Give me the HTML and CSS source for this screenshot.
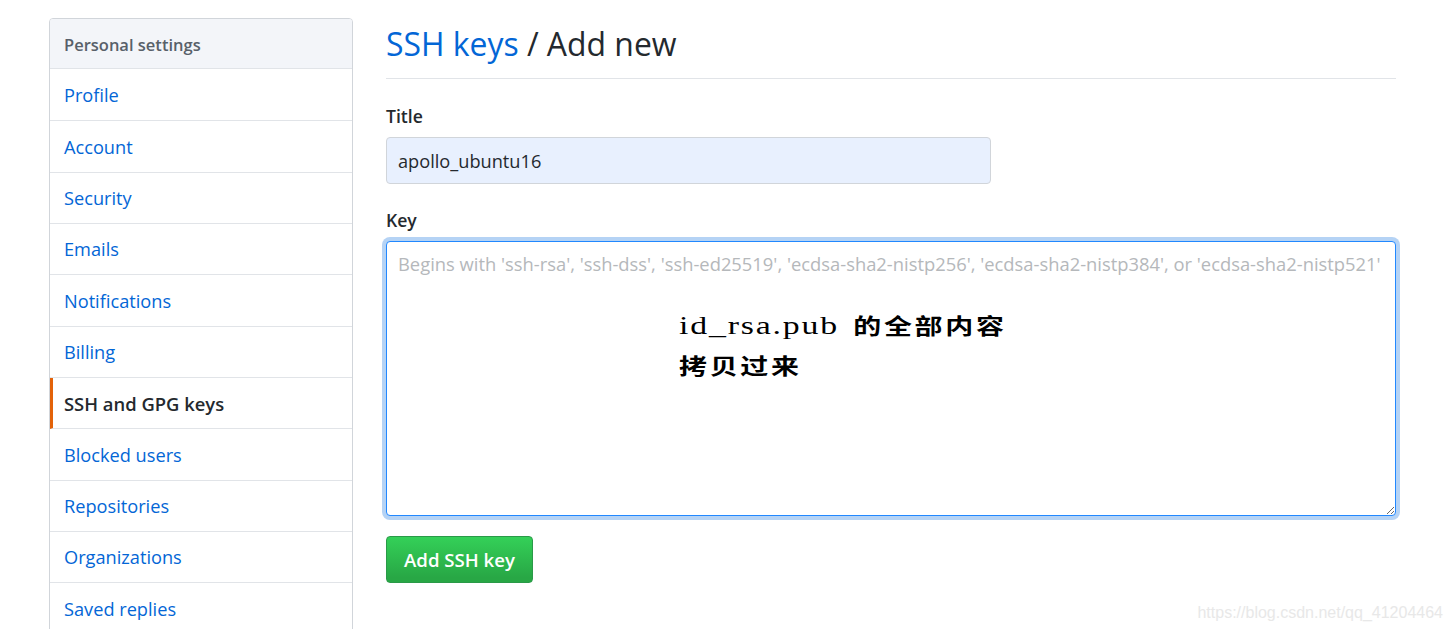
FILE: index.html
```html
<!DOCTYPE html>
<html lang="zh-CN">
<head>
    <meta charset="UTF-8">
    <title>SSH keys / Add new</title>
    <link rel="stylesheet" href="styles.css">
</head>
<body>
    <div class="page">
        <nav class="menu">
            <h3 class="menu-heading">Personal settings</h3>
            <a href="#" class="menu-item">Profile</a>
            <a href="#" class="menu-item">Account</a>
            <a href="#" class="menu-item">Security</a>
            <a href="#" class="menu-item">Emails</a>
            <a href="#" class="menu-item">Notifications</a>
            <a href="#" class="menu-item">Billing</a>
            <a href="#" class="menu-item selected">SSH and GPG keys</a>
            <a href="#" class="menu-item">Blocked users</a>
            <a href="#" class="menu-item">Repositories</a>
            <a href="#" class="menu-item">Organizations</a>
            <a href="#" class="menu-item">Saved replies</a>
        </nav>

        <main class="content">
            <h2 class="page-title"><a href="#">SSH keys</a> / Add new</h2>

            <form class="key-form">
                <label class="field-label" for="key-title">Title</label>
                <input class="title-input" id="key-title" type="text" value="apollo_ubuntu16">

                <label class="field-label key-label" for="key-body">Key</label>
                <div class="key-wrap">
                    <textarea class="key-input" id="key-body" placeholder="Begins with 'ssh-rsa', 'ssh-dss', 'ssh-ed25519', 'ecdsa-sha2-nistp256', 'ecdsa-sha2-nistp384', or 'ecdsa-sha2-nistp521'"></textarea>
                    <!-- note pasted over the screenshot -->
                    <div class="key-note">
                        <p><span class="note-latin">id_rsa.pub</span> 的全部内容</p>
                        <p>拷贝过来</p>
                    </div>
                </div>

                <button class="add-button" type="button">Add SSH key</button>
            </form>
        </main>
    </div>

    <div class="watermark">https://blog.csdn.net/qq_41204464</div>
</body>
</html>
```

FILE: styles.css
```css
/* Basic styles */
*, *::before, *::after {
    box-sizing: border-box;
    margin: 0;
    padding: 0;
}

html, body {
    height: 629px;
    overflow: hidden;
}

body {
    font-family: "Open Sans", "Noto Sans", "Liberation Sans", sans-serif;
    font-size: 18.2px;
    color: #24292e;
    background-color: #fff;
    position: relative;
}

a {
    color: #0366d6;
    text-decoration: none;
}

.page {
    display: flex;
    align-items: flex-start;
    padding: 18px 55px 0 49px;
    gap: 33px;
}

/* Sidebar */
.menu {
    flex: 0 0 304px;
    border: 1px solid #d1d5da;
    border-radius: 4px;
    overflow: hidden;
}

.menu-heading {
    height: 50px;
    margin-bottom: 1.1px;
    padding: 1px 14px 0;
    display: flex;
    align-items: center;
    font-size: 16.5px;
    font-weight: 600;
    color: #586069;
    background-color: #f3f5f9;
    border-bottom: 1px solid #e1e4e8;
}

.menu-item {
    display: flex;
    align-items: center;
    height: 51.33px;
    padding: 0 14px;
    border-bottom: 1px solid #e1e4e8;
}

.menu-item.selected {
    font-size: 18.4px;
    font-weight: 600;
    color: #24292e;
    border-left: 3px solid #e36209;
    padding-left: 11px;
}

/* Main column */
.content {
    flex: 1;
    min-width: 0;
}

.page-title {
    font-size: 31.9px;
    font-weight: 400;
    line-height: 52px;
    height: 61px;
    padding-bottom: 9px;
    border-bottom: 1px solid #e1e4e8;
}

.key-form {
    padding-top: 25px;
}

.field-label {
    display: block;
    font-size: 17.6px;
    font-weight: 600;
    line-height: 24px;
    margin-bottom: 9px;
}

.key-label {
    margin-top: 24px;
    margin-bottom: 10px;
}

.title-input {
    display: block;
    width: 605px;
    height: 47px;
    padding: 0 11px;
    font: inherit;
    color: #24292e;
    background-color: #e8f0fe;
    border: 1px solid #d1d5da;
    border-radius: 4px;
    outline: none;
}

.key-wrap {
    position: relative;
    margin-top: -1px;
}

.key-input {
    display: block;
    width: 100%;
    height: 275px;
    padding: 9px 11px;
    font: inherit;
    font-size: 18.38px;
    line-height: 26px;
    border: 1px solid #2188ff;
    border-radius: 4px;
    outline: none;
    box-shadow: 0 0 0 4px #b5d3f5;
}

.key-input::placeholder {
    color: #b5b8bb;
    opacity: 1;
}

/* stretched sideways like the pasted picture */
.key-note {
    position: absolute;
    left: 293px;
    top: 65px;
    transform: scaleX(1.3);
    transform-origin: left top;
    font-family: "Noto Sans CJK SC", sans-serif;
    font-size: 21.5px;
    font-weight: 700;
    line-height: 38.5px;
    letter-spacing: 2.1px;
    white-space: nowrap;
    color: #000;
}

.note-latin {
    font-family: "Liberation Serif", serif;
    font-size: 26px;
    font-weight: 400;
    letter-spacing: 1.4px;
    margin-right: 4px;
}

.add-button {
    display: block;
    width: 147px;
    height: 47px;
    margin-top: 20px;
    font: inherit;
    font-size: 18.6px;
    font-weight: 600;
    color: #fff;
    background-image: linear-gradient(#34d058, #28a745 90%);
    border: 1px solid #2a9a48;
    border-radius: 4px;
}

.watermark {
    position: absolute;
    right: 8px;
    bottom: 7px;
    font-family: "Liberation Sans", sans-serif;
    font-size: 16px;
    color: #e8e8e8;
}
```
